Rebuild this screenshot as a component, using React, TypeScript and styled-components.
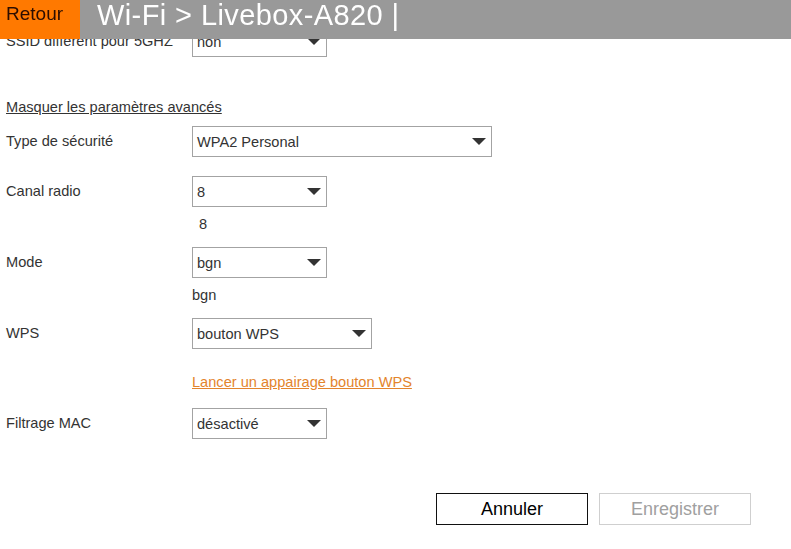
import React from "react";
import styled, { createGlobalStyle } from "styled-components";

const Global = createGlobalStyle`
  html, body { margin: 0; padding: 0; background: #fff; }
  body { font-family: Arial, "Liberation Sans", sans-serif; color: #333; overflow: hidden; }
`;

const Header = styled.header`
  position: fixed;
  top: 0;
  left: 0;
  right: 0;
  height: 39px;
  background: #999999;
  display: flex;
  align-items: flex-start;
  z-index: 2;
`;

const BackButton = styled.button`
  height: 39px;
  width: 80px;
  background: #ff7900;
  border: none;
  margin: 0;
  padding: 2px 0 0 6px;
  text-align: left;
  align-self: stretch;
  display: flex;
  align-items: flex-start;
  font-family: Arial, "Liberation Sans", sans-serif;
  font-size: 19px;
  line-height: 24px;
  color: #2b0d00;
  cursor: pointer;
`;

const Title = styled.h1`
  margin: 0 0 0 17px;
  font-weight: normal;
  font-size: 29px;
  line-height: 30px;
  letter-spacing: 0.4px;
  color: #fff;
  white-space: nowrap;
`;

const Main = styled.main`
  padding: 26px 0 0 6px;
  font-size: 14.6px;
`;

const Row = styled.div<{ $mb?: number }>`
  display: flex;
  align-items: flex-start;
  margin-bottom: ${(p) => (p.$mb ?? 19)}px;
`;

const Label = styled.div`
  width: 186px;
  flex: none;
  padding-top: 7px;
  line-height: 16px;
  font-size: 14.6px;
  color: #333;
  white-space: nowrap;
`;

const Field = styled.div`
  display: flex;
  flex-direction: column;
  align-items: flex-start;
`;

const SelectBox = styled.div<{ $w: number }>`
  box-sizing: border-box;
  width: ${(p) => p.$w}px;
  height: 31px;
  border: 1px solid #a3a3a3;
  background: #fff;
  display: flex;
  align-items: center;
  justify-content: space-between;
  padding: 0 5px 0 4px;
  font-size: 14.6px;
  color: #333;
`;

const Arrow = styled.svg`
  width: 14px;
  height: 7px;
  flex: none;
`;

const Static = styled.div<{ $indent?: number }>`
  margin-top: 9px;
  padding-left: ${(p) => p.$indent ?? 0}px;
  line-height: 16px;
  font-size: 14.6px;
  color: #333;
`;

const ToggleLink = styled.a`
  display: block;
  margin: 0 0 11px 0;
  padding-top: 42px;
  line-height: 16px;
  font-size: 14.6px;
  color: #333;
  text-decoration: underline;
  width: fit-content;
`;

const ActionLink = styled.a`
  display: block;
  margin-top: 24px;
  line-height: 18px;
  font-size: 14.6px;
  color: #e3842c;
  text-decoration: underline;
  white-space: nowrap;
`;

const Actions = styled.div`
  display: flex;
  justify-content: flex-end;
  gap: 11px;
  padding-right: 40px;
  margin-top: 54px;
`;

const Button = styled.button<{ $disabled?: boolean }>`
  box-sizing: border-box;
  width: 152px;
  height: 32px;
  background: #fff;
  border: ${(p) => (p.$disabled ? "1px solid #cfcfcf" : "1.5px solid #111")};
  font-family: Arial, "Liberation Sans", sans-serif;
  font-size: 18px;
  color: ${(p) => (p.$disabled ? "#a0a0a0" : "#000")};
  padding: 0;
`;

function Select({ value, width }: { value: string; width: number }) {
  return (
    <SelectBox $w={width}>
      <span>{value}</span>
      <Arrow viewBox="0 0 14 7">
        <polygon points="0,0 14,0 7,7" fill="#333" />
      </Arrow>
    </SelectBox>
  );
}

export default function App() {
  return (
    <>
      <Global />
      <Header>
        <BackButton>Retour</BackButton>
        <Title>Wi-Fi &gt; Livebox-A820 |</Title>
      </Header>
      <Main>
        <Row $mb={0}>
          <Label>SSID différent pour 5GHZ</Label>
          <Field>
            <Select value="non" width={135} />
          </Field>
        </Row>
        <ToggleLink>Masquer les paramètres avancés</ToggleLink>
        <Row>
          <Label>Type de sécurité</Label>
          <Field>
            <Select value="WPA2 Personal" width={300} />
          </Field>
        </Row>
        <Row $mb={15}>
          <Label>Canal radio</Label>
          <Field>
            <Select value="8" width={135} />
            <Static $indent={7}>8</Static>
          </Field>
        </Row>
        <Row $mb={15}>
          <Label>Mode</Label>
          <Field>
            <Select value="bgn" width={135} />
            <Static>bgn</Static>
          </Field>
        </Row>
        <Row $mb={17}>
          <Label>WPS</Label>
          <Field>
            <Select value="bouton WPS" width={180} />
            <ActionLink>Lancer un appairage bouton WPS</ActionLink>
          </Field>
        </Row>
        <Row $mb={0}>
          <Label>Filtrage MAC</Label>
          <Field>
            <Select value="désactivé" width={135} />
          </Field>
        </Row>
        <Actions>
          <Button>Annuler</Button>
          <Button $disabled>Enregistrer</Button>
        </Actions>
      </Main>
    </>
  );
}
